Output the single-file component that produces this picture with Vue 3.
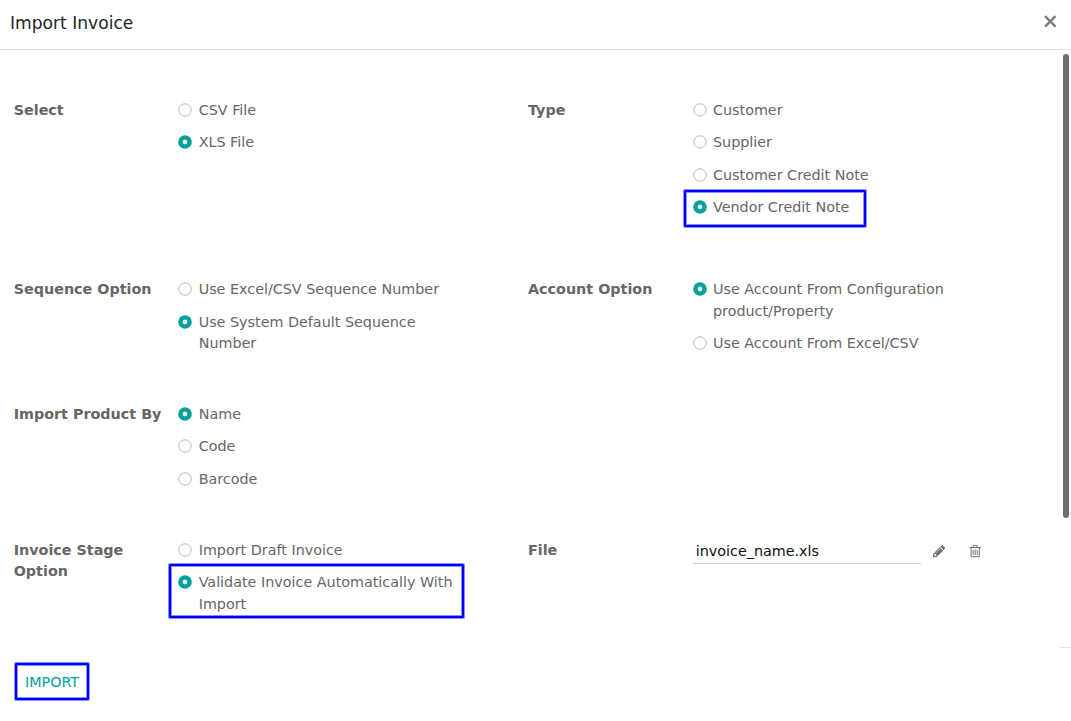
<script setup>
import { ref } from 'vue'

const fields = ref([
  { key: 'select', label: 'Select', value: 'XLS File', options: ['CSV File', 'XLS File'] },
  {
    key: 'type',
    label: 'Type',
    value: 'Vendor Credit Note',
    options: ['Customer', 'Supplier', 'Customer Credit Note', 'Vendor Credit Note'],
    marked: 'Vendor Credit Note',
    frame: 'frame-vendor',
  },
  {
    key: 'sequence',
    label: 'Sequence Option',
    value: 'Use System Default Sequence Number',
    options: ['Use Excel/CSV Sequence Number', 'Use System Default Sequence Number'],
  },
  {
    key: 'account',
    label: 'Account Option',
    value: 'Use Account From Configuration product/Property',
    options: ['Use Account From Configuration product/Property', 'Use Account From Excel/CSV'],
  },
  { key: 'product', label: 'Import Product By', value: 'Name', options: ['Name', 'Code', 'Barcode'] },
  { key: 'blank', blank: true },
  {
    key: 'stage',
    label: 'Invoice Stage Option',
    value: 'Validate Invoice Automatically With Import',
    options: ['Import Draft Invoice', 'Validate Invoice Automatically With Import'],
    marked: 'Validate Invoice Automatically With Import',
    frame: 'frame-validate',
  },
])
const fileName = 'invoice_name.xls'
</script>

<template>
  <div class="dialog">
    <header class="header">
      <h4 class="title">Import Invoice</h4>
      <button class="close" aria-label="Close">
        <svg width="14" height="14" viewBox="0 0 14 14">
          <path d="M2.1 2.2 12.5 12.6M12.5 2.2 2.1 12.6" fill="none" stroke="#7c7c7c" stroke-width="2.4" />
        </svg>
      </button>
    </header>

    <main class="body">
      <div class="form">
        <section v-for="f in fields" :key="f.key" class="field">
          <template v-if="!f.blank">
            <div class="label">{{ f.label }}</div>
            <div class="options">
              <div v-for="o in f.options" :key="o" class="option" @click="f.value = o">
                <svg class="radio" viewBox="0 0 14 14">
                  <template v-if="f.value === o">
                    <circle cx="7" cy="7" r="6.75" fill="#00a09d" />
                    <circle cx="7" cy="7" r="2.4" fill="#e9ecef" />
                  </template>
                  <circle v-else cx="7" cy="7" r="6.2" fill="#fff" stroke="#b4bac3" />
                </svg>
                <span class="text">{{ o }}</span>
                <span v-if="f.marked === o" class="frame" :class="f.frame"></span>
              </div>
            </div>
          </template>
        </section>
        <section class="field">
          <div class="label">File</div>
          <div class="file">
            <div class="file-name">{{ fileName }}</div>
            <svg class="icon pencil" viewBox="0 0 1792 1792">
              <path d="M491 1536l91-91-235-235-91 91v107h128v128h107zm523-928q0-22-22-22-10 0-17 7l-542 542q-7 7-7 17 0 22 22 22 10 0 17-7l542-542q7-7 7-17zm-54-192l416 416-832 832h-416v-416zm683 96q0 53-37 90l-166 166-416-416 166-165q36-38 90-38 53 0 91 38l235 234q37 39 37 91z" />
            </svg>
            <svg class="icon trash" viewBox="0 0 1792 1792">
              <path d="M704 736v576q0 14-9 23t-23 9h-64q-14 0-23-9t-9-23v-576q0-14 9-23t23-9h64q14 0 23 9t9 23zm256 0v576q0 14-9 23t-23 9h-64q-14 0-23-9t-9-23v-576q0-14 9-23t23-9h64q14 0 23 9t9 23zm256 0v576q0 14-9 23t-23 9h-64q-14 0-23-9t-9-23v-576q0-14 9-23t23-9h64q14 0 23 9t9 23zm128 724v-948h-896v948q0 22 7 40.5t14.5 27 10.5 8.5h832q3 0 10.5-8.5t14.5-27 7-40.5zm-672-1076h448l-48-117q-7-9-17-11h-317q-10 2-17 11zm928 32v64q0 14-9 23t-23 9h-96v948q0 83-47 143.5t-113 60.5h-832q-66 0-113-58.5t-47-141.5v-952h-96q-14 0-23-9t-9-23v-64q0-14 9-23t23-9h309l70-167q15-37 54-63t79-26h320q40 0 79 26t54 63l70 167h309q14 0 23 9t9 23z" />
            </svg>
          </div>
        </section>
      </div>
      <div class="track"><div class="thumb"></div></div>
    </main>

    <footer class="footer">
      <button class="import">IMPORT</button>
    </footer>
  </div>
</template>

<style>
body {
  margin: 0;
  background: #fff;
}
</style>

<style scoped>
.dialog {
  width: 1071px;
  height: 721px;
  display: flex;
  flex-direction: column;
  overflow: hidden;
  background: #fff;
  color: #666;
  font: 14.33px/21.6px 'DejaVu Sans', sans-serif;
}
.header {
  box-sizing: border-box;
  height: 50px;
  flex: none;
  display: flex;
  justify-content: space-between;
  padding: 0 14px 0 10px;
  border-bottom: 1px solid #e2e2e2;
}
.title {
  margin: 10px 0 0;
  font-size: 17.12px;
  line-height: 26px;
  font-weight: 400;
  color: #212529;
}
button {
  padding: 0;
  border: 0;
  background: none;
  font: inherit;
}
.close {
  width: 14px;
  height: 14px;
  margin-top: 14px;
}
.close svg {
  display: block;
}
.body {
  height: 598px;
  flex: none;
  display: flex;
  justify-content: space-between;
}
.form {
  display: grid;
  grid-template-columns: 514.3px 514.3px;
  grid-template-rows: 179.2px 124.8px 136px 100px;
  padding: 50px 0 0 13.7px;
}
.field {
  display: grid;
  grid-template-columns: 150px 284px;
  column-gap: 14.8px;
  align-items: start;
}
.label {
  font-weight: 700;
  line-height: 21.3px;
}
.options {
  display: flex;
  flex-direction: column;
  gap: 10.8px;
}
.option {
  position: relative;
  display: flex;
  gap: 6.2px;
}
.radio {
  width: 14px;
  height: 14px;
  flex: none;
  margin-top: 3px;
}
.frame {
  position: absolute;
  box-sizing: border-box;
}
.frame,
.import {
  border: 2px solid #00f;
  border-radius: 1px;
  box-shadow: 0 0 0 1px rgba(0, 0, 255, 0.45), inset 0 0 0 1px rgba(0, 0, 255, 0.45);
}
.frame-vendor {
  left: -9px;
  top: -7px;
  width: 182px;
  height: 37px;
}
.frame-validate {
  left: -9.5px;
  top: -8.5px;
  width: 295px;
  height: 54px;
}
.file {
  display: flex;
}
.file-name {
  box-sizing: border-box;
  width: 228px;
  height: 24px;
  flex: none;
  padding: 1px 3px 0;
  border-bottom: 1px solid #ccc;
  color: #111;
}
.icon {
  width: 14.4px;
  height: 14.4px;
  flex: none;
  margin-top: 3.7px;
  fill: #6c757d;
}
.pencil {
  margin-left: 11.4px;
}
.trash {
  margin-left: 21.6px;
}
.track {
  box-sizing: border-box;
  width: 11px;
  padding: 4px 2px 0 3px;
  border-bottom: 1px solid #e2e2e2;
  background: #fefefe;
}
.thumb {
  width: 6px;
  height: 464px;
  border-radius: 3px;
  background: #6c6e6f;
}
.footer {
  padding: 15px;
}
.import {
  box-sizing: border-box;
  width: 74px;
  height: 37px;
  padding-top: 2px;
  color: #00a09d;
}
</style>
